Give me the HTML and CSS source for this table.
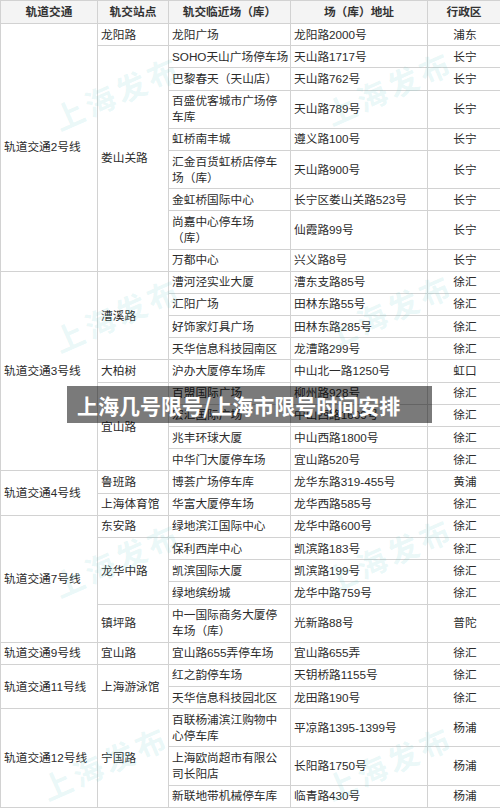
FILE: index.html
```html
<!DOCTYPE html>
<html lang="zh-CN">
<head>
<meta charset="utf-8">
<title>上海几号限号/上海市限号时间安排</title>
<link rel="stylesheet" href="styles.css">
</head>
<body>
<div class="page">
  <table class="grid">
    <colgroup>
      <col class="c1"><col class="c2"><col class="c3"><col class="c4"><col class="c5">
    </colgroup>
    <thead>
      <tr><th>轨道交通</th><th>轨交站点</th><th>轨交临近场（库）</th><th>场（库）地址</th><th>行政区</th></tr>
    </thead>
    <tbody>
      <tr><td rowspan="9">轨道交通2号线</td><td>龙阳路</td><td>龙阳广场</td><td>龙阳路2000号</td><td class="dist">浦东</td></tr>
      <tr><td rowspan="8">娄山关路</td><td>SOHO天山广场停车场</td><td>天山路1717号</td><td class="dist">长宁</td></tr>
      <tr><td>巴黎春天（天山店）</td><td>天山路762号</td><td class="dist">长宁</td></tr>
      <tr><td>百盛优客城市广场停<br>车库</td><td>天山路789号</td><td class="dist">长宁</td></tr>
      <tr><td>虹桥南丰城</td><td>遵义路100号</td><td class="dist">长宁</td></tr>
      <tr><td>汇金百货虹桥店停车<br>场（库）</td><td>天山路900号</td><td class="dist">长宁</td></tr>
      <tr><td>金虹桥国际中心</td><td>长宁区娄山关路523号</td><td class="dist">长宁</td></tr>
      <tr><td>尚嘉中心停车场<br>（库）</td><td>仙霞路99号</td><td class="dist">长宁</td></tr>
      <tr><td>万都中心</td><td>兴义路8号</td><td class="dist">长宁</td></tr>
      <tr><td rowspan="9">轨道交通3号线</td><td rowspan="4">漕溪路</td><td>漕河泾实业大厦</td><td>漕东支路85号</td><td class="dist">徐汇</td></tr>
      <tr><td>汇阳广场</td><td>田林东路55号</td><td class="dist">徐汇</td></tr>
      <tr><td>好饰家灯具广场</td><td>田林东路285号</td><td class="dist">徐汇</td></tr>
      <tr><td>天华信息科技园南区</td><td>龙漕路299号</td><td class="dist">徐汇</td></tr>
      <tr><td>大柏树</td><td>沪办大厦停车场库</td><td>中山北一路1250号</td><td class="dist">虹口</td></tr>
      <tr><td rowspan="4">宜山路</td><td>百盟国际广场</td><td>柳州路928号</td><td class="dist">徐汇</td></tr>
      <tr><td>宏汇国际广场</td><td>中山西路1600号</td><td class="dist">徐汇</td></tr>
      <tr><td>兆丰环球大厦</td><td>中山西路1800号</td><td class="dist">徐汇</td></tr>
      <tr><td>中华门大厦停车场</td><td>宜山路520号</td><td class="dist">徐汇</td></tr>
      <tr><td rowspan="2">轨道交通4号线</td><td>鲁班路</td><td>博荟广场停车库</td><td>龙华东路319-455号</td><td class="dist">黄浦</td></tr>
      <tr><td>上海体育馆</td><td>华富大厦停车场</td><td>龙华西路585号</td><td class="dist">徐汇</td></tr>
      <tr><td rowspan="5">轨道交通7号线</td><td>东安路</td><td>绿地滨江国际中心</td><td>龙华中路600号</td><td class="dist">徐汇</td></tr>
      <tr><td rowspan="3">龙华中路</td><td>保利西岸中心</td><td>凯滨路183号</td><td class="dist">徐汇</td></tr>
      <tr><td>凯滨国际大厦</td><td>凯滨路199号</td><td class="dist">徐汇</td></tr>
      <tr><td>绿地缤纷城</td><td>龙华中路759号</td><td class="dist">徐汇</td></tr>
      <tr><td>镇坪路</td><td>中一国际商务大厦停<br>车场（库）</td><td>光新路88号</td><td class="dist">普陀</td></tr>
      <tr><td>轨道交通9号线</td><td>宜山路</td><td>宜山路655弄停车场</td><td>宜山路655弄</td><td class="dist">徐汇</td></tr>
      <tr><td rowspan="2">轨道交通11号线</td><td rowspan="2">上海游泳馆</td><td>红之韵停车场</td><td>天钥桥路1155号</td><td class="dist">徐汇</td></tr>
      <tr><td>天华信息科技园北区</td><td>龙田路190号</td><td class="dist">徐汇</td></tr>
      <tr><td rowspan="3">轨道交通12号线</td><td rowspan="3">宁国路</td><td>百联杨浦滨江购物中<br>心停车库</td><td>平凉路1395-1399号</td><td class="dist">杨浦</td></tr>
      <tr><td>上海欧尚超市有限公<br>司长阳店</td><td>长阳路1750号</td><td class="dist">杨浦</td></tr>
      <tr><td>新联地带机械停车库</td><td>临青路430号</td><td class="dist">杨浦</td></tr>
    </tbody>
  </table>

  <div class="wm wm-a1">上海发布</div>
  <div class="wm wm-b1">上海发布</div>
  <div class="wm wm-a2">上海发布</div>
  <div class="wm wm-b2">上海发布</div>
  <div class="wm wm-a3">上海发布</div>
  <div class="wm wm-b3">上海发布</div>
  <div class="wm wm-a4">上海发布</div>
  <div class="wm wm-b4">上海发布</div>

  <div class="banner">上海几号限号/上海市限号时间安排</div>
</div>
</body>
</html>
```

FILE: styles.css
```css
html, body {
  margin: 0;
  padding: 0;
  background: #ffffff;
}

body {
  font-family: "Liberation Sans", "Noto Sans CJK SC", sans-serif;
  color: #2b2b2b;
}

.page {
  position: relative;
  width: 500px;
  height: 809px;
  overflow: hidden;
}

.grid {
  width: 500px;
  border-collapse: collapse;
  table-layout: fixed;
  font-size: 11.7px;
  line-height: 16px;
}

.c1 { width: 97px; }
.c2 { width: 71px; }
.c3 { width: 122px; }
.c4 { width: 137px; }
.c5 { width: 73px; }

.grid th,
.grid td {
  border: 1px solid #d2d2d2;
  vertical-align: middle;
  white-space: nowrap;
  overflow: hidden;
}

.grid th {
  background: #f4f4f4;
  font-weight: bold;
  text-align: center;
  padding: 3px 2px;
  color: #333333;
}

.grid td {
  text-align: left;
  padding: 2.6px 1px 2.6px 3px;
}

.grid td.dist {
  text-align: center;
}

.wm {
  position: absolute;
  font-family: "Noto Sans CJK SC", sans-serif;
  font-size: 30px;
  font-weight: bold;
  letter-spacing: 4px;
  line-height: 36px;
  color: rgba(100, 205, 205, 0.15);
  transform: rotate(-24deg);
  transform-origin: left bottom;
  white-space: nowrap;
  pointer-events: none;
}

.wm-a1 { left: 62px; top: 100px; }
.wm-b1 { left: 334px; top: 95px; }
.wm-a2 { left: 62px; top: 322px; }
.wm-b2 { left: 334px; top: 318px; }
.wm-a3 { left: 62px; top: 567px; }
.wm-b3 { left: 334px; top: 562px; }
.wm-a4 { left: 50px; top: 770px; }
.wm-b4 { left: 334px; top: 770px; }

.banner {
  position: absolute;
  left: 67px;
  top: 386px;
  width: 365px;
  height: 37px;
  box-sizing: border-box;
  padding-left: 10px;
  display: flex;
  align-items: center;
  background: rgba(0, 0, 0, 0.52);
  color: #ffffff;
  font-family: "Noto Sans CJK SC", sans-serif;
  font-size: 21px;
  font-weight: bold;
  white-space: nowrap;
}
```
